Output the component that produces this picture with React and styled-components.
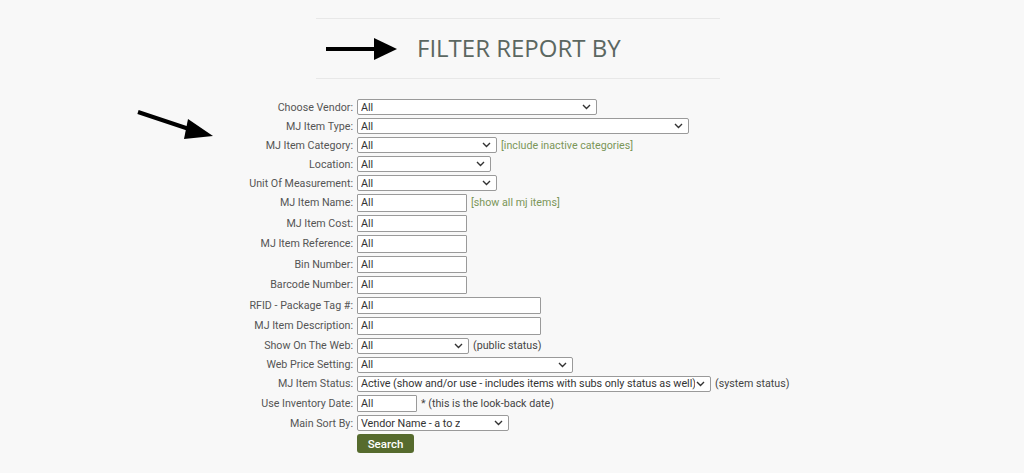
import { createGlobalStyle, styled } from "styled-components";

const GlobalStyle = createGlobalStyle`
  html, body {
    margin: 0;
    background: #f8f8f8;
    font-family: Roboto, "Liberation Sans", sans-serif;
  }
`;

const Page = styled.div`
  position: relative;
  padding-top: 18px;
  min-height: 473px;
  box-sizing: border-box;
`;

const Header = styled.div`
  margin-left: 316px;
  width: 404px;
  height: 61px;
  box-sizing: border-box;
  border-top: 1px solid #e8e8e8;
  border-bottom: 1px solid #e8e8e8;
  display: flex;
  align-items: center;
  gap: 19px;
  padding-left: 10px;
`;

const Title = styled.h2`
  margin: 0 0 2px;
  font-family: "Open Sans", sans-serif;
  font-weight: 400;
  font-size: 24px;
  color: #5b6761;
`;

const SideArrow = styled.svg`
  position: absolute;
  left: 134px;
  top: 106px;
`;

const Form = styled.div`
  margin-top: 20px;
  display: grid;
  grid-template-columns: 353px auto;
  column-gap: 4px;
  row-gap: 3px;
  align-items: center;
`;

const Label = styled.div`
  text-align: right;
  font-size: 10.7px;
  color: #555;
  white-space: nowrap;
`;

const Control = styled.div`
  display: flex;
  align-items: center;
  gap: 4px;
  font-size: 10.7px;
  color: #444;
`;

const SelectBox = styled.div`
  position: relative;
  width: ${(p) => p.$w}px;
  height: 16px;
  box-sizing: border-box;
  border: 1px solid #9a9a9a;
  border-radius: 2px;
  background: #fff;
  display: flex;
  align-items: center;
  padding: 0 15px 0 3px;
  font-size: 10.8px;
  color: #333;
  white-space: nowrap;
  overflow: hidden;
`;

const Value = styled.span`
  overflow: hidden;
  letter-spacing: -0.05px;
`;

const Chevron = styled.svg`
  position: absolute;
  right: 5px;
  top: 4px;
`;

const TextBox = styled.div`
  width: ${(p) => p.$w}px;
  height: 17.5px;
  box-sizing: border-box;
  border: 1px solid #9a9a9a;
  border-radius: 1px;
  background: #fff;
  display: flex;
  align-items: center;
  padding-left: 3px;
  font-size: 10.8px;
  color: #333;
`;

const Link = styled.span`
  color: #7b9658;
`;

const Note = styled.span`
  color: #444;
`;

const Button = styled.button`
  width: 57px;
  height: 19px;
  padding: 0;
  border: none;
  border-radius: 3px;
  background: #566b2e;
  color: #fff;
  font-family: Roboto, sans-serif;
  font-size: 11.5px;
  font-weight: 500;
`;

function Select({ w, value = "All" }) {
  return (
    <SelectBox $w={w}>
      <Value>{value}</Value>
      <Chevron width="9" height="6" viewBox="0 0 9 6">
        <path d="M1 1 L4.5 4.5 L8 1" fill="none" stroke="#333" strokeWidth="1.4" />
      </Chevron>
    </SelectBox>
  );
}

const rows = [
  { label: "Choose Vendor:", type: "select", w: 240 },
  { label: "MJ Item Type:", type: "select", w: 332 },
  { label: "MJ Item Category:", type: "select", w: 140, link: "[include inactive categories]" },
  { label: "Location:", type: "select", w: 134 },
  { label: "Unit Of Measurement:", type: "select", w: 140 },
  { label: "MJ Item Name:", type: "text", w: 110, link: "[show all mj items]" },
  { label: "MJ Item Cost:", type: "text", w: 110 },
  { label: "MJ Item Reference:", type: "text", w: 110 },
  { label: "Bin Number:", type: "text", w: 110 },
  { label: "Barcode Number:", type: "text", w: 110 },
  { label: "RFID - Package Tag #:", type: "text", w: 184 },
  { label: "MJ Item Description:", type: "text", w: 184 },
  { label: "Show On The Web:", type: "select", w: 112, note: "(public status)" },
  { label: "Web Price Setting:", type: "select", w: 216 },
  {
    label: "MJ Item Status:",
    type: "select",
    w: 354,
    value: "Active (show and/or use - includes items with subs only status as well)",
    note: "(system status)",
  },
  { label: "Use Inventory Date:", type: "text", w: 60, note: "* (this is the look-back date)" },
  { label: "Main Sort By:", type: "select", w: 152, value: "Vendor Name - a to z" },
];

export default function App() {
  return (
    <Page>
      <GlobalStyle />
      <Header>
        <svg width="72" height="24" viewBox="0 0 72 24">
          <path d="M0 10 H50 V14 H0 Z" fill="#000" />
          <polygon points="48,1 71,12 48,23" fill="#000" />
        </svg>
        <Title>FILTER REPORT BY</Title>
      </Header>

      <SideArrow width="82" height="36" viewBox="0 0 82 36">
        <line x1="4" y1="6" x2="58" y2="24" stroke="#000" strokeWidth="4" />
        <polygon points="54,13 79,30 50,33" fill="#000" />
      </SideArrow>

      <Form>
        {rows.map((r) => (
          <>
            <Label key={r.label + "l"}>{r.label}</Label>
            <Control key={r.label + "c"}>
              {r.type === "select" ? (
                <Select w={r.w} value={r.value} />
              ) : (
                <TextBox $w={r.w}>All</TextBox>
              )}
              {r.link && <Link>{r.link}</Link>}
              {r.note && <Note>{r.note}</Note>}
            </Control>
          </>
        ))}
        <div />
        <Control>
          <Button>Search</Button>
        </Control>
      </Form>
    </Page>
  );
}
